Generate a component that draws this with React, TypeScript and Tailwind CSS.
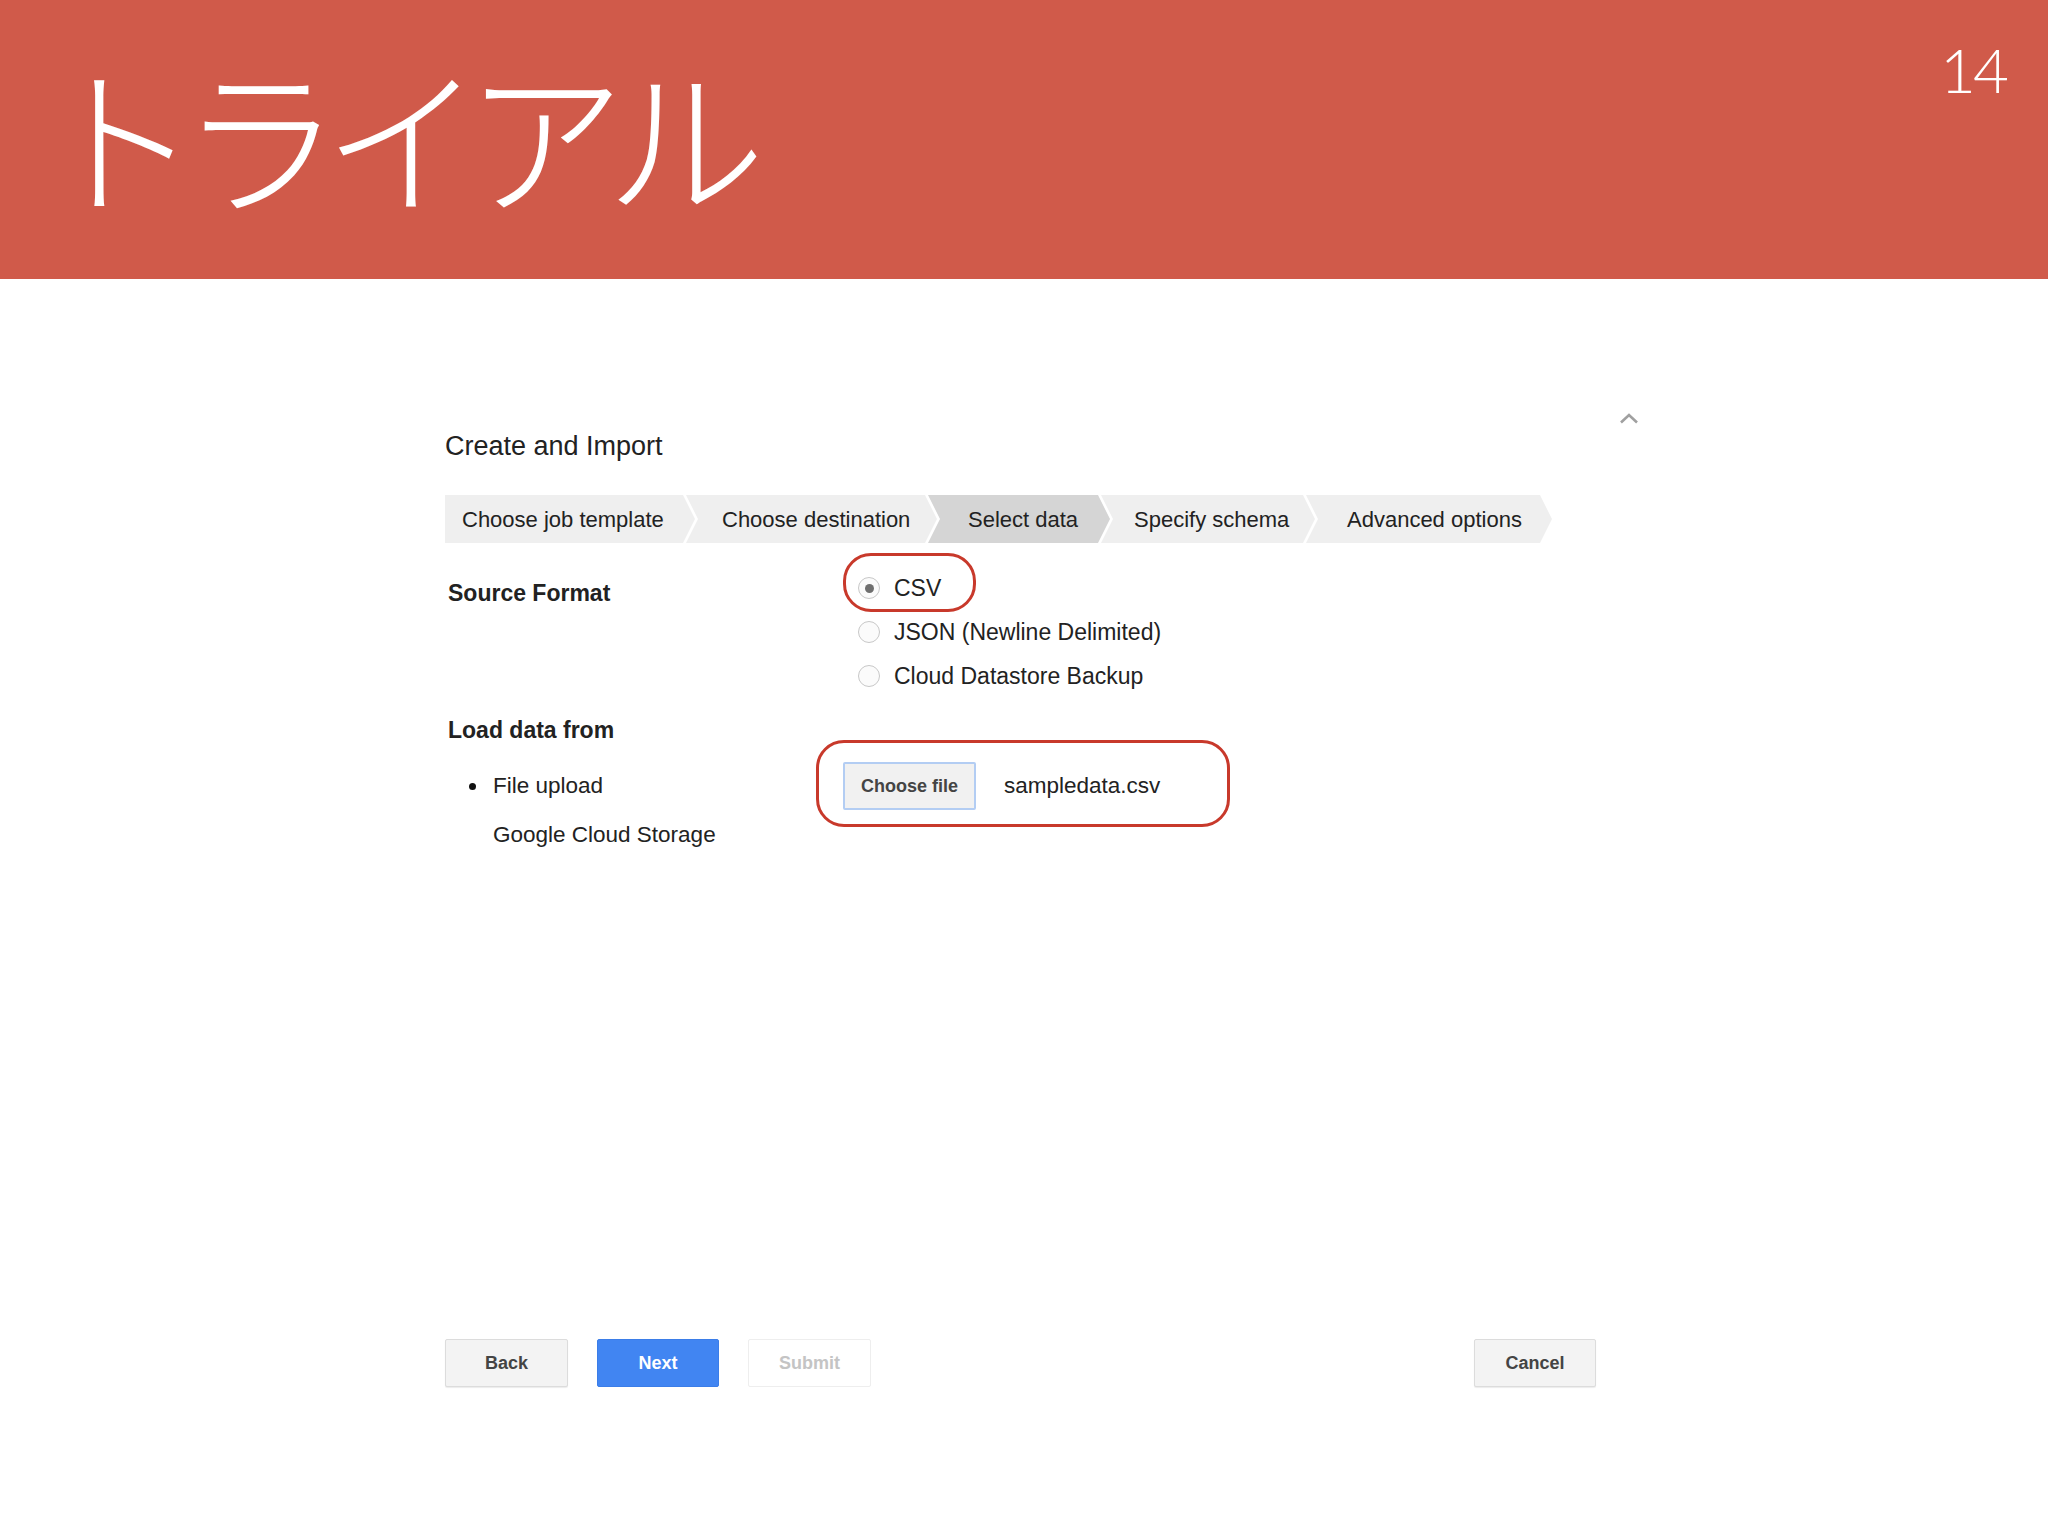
import React from 'react';

const steps = [
    { label: 'Choose job template', w: 'w-[250px]', pl: 'pl-[17px]', first: true },
    { label: 'Choose destination', w: 'w-[251px]', pl: 'pl-[36px]' },
    { label: 'Select data', w: 'w-[182px]', pl: 'pl-[40px]', active: true },
    { label: 'Specify schema', w: 'w-[214px]', pl: 'pl-[33px]' },
    { label: 'Advanced options', w: 'w-[246px]', pl: 'pl-[41px]' },
];

function Radio({ checked, label }: { checked?: boolean; label: string }) {
    return (
        <div className="h-[44px] flex items-center">
            <span className="w-[22px] h-[22px] rounded-full border border-[#c8c8c8] bg-[#fbfbfb] flex items-center justify-center">
                {checked && <span className="w-[9px] h-[9px] rounded-full bg-[#6f6f6f]" />}
            </span>
            <span className="ml-[14px] text-[23px] text-[#222]">{label}</span>
        </div>
    );
}

export default function App() {
    return (
        <div className="w-[2048px] h-[1536px] bg-white overflow-hidden font-['Liberation_Sans',Arial,sans-serif]">
            {/* Slide header */}
            <div className="h-[279px] bg-[#d05a4a] flex justify-between items-start">
                <h1 className="ml-[39px] mt-[53px] text-[160px] leading-[160px] font-light text-white tracking-[-18px] font-['Noto_Sans_CJK_JP',sans-serif]">
                    トライアル
                </h1>
                <span className="mr-[42px] mt-[38px] text-[62px] leading-[62px] font-light tracking-[-3px] text-white font-['Lato',sans-serif]">14</span>
            </div>

            {/* Dialog */}
            <div className="pl-[445px] pt-[134px]">
                <div className="w-[1195px] flex justify-between items-start">
                    <h2 className="mt-[18px] text-[27px] leading-[30px] text-[#222]">Create and Import</h2>
                    <svg width="20" height="11" viewBox="0 0 20 11" className="mr-px">
                        <polyline points="2,9.5 10,2 18,9.5" fill="none" stroke="#a0a0a0" strokeWidth="2.6" />
                    </svg>
                </div>

                {/* Steps */}
                <div className="mt-[34px] flex h-[48px]">
                    {steps.map((s, i) => (
                        <div
                            key={s.label}
                            className={`${s.w} ${s.pl} ${i > 0 ? '-ml-[9px]' : ''} h-full flex items-center text-[22px] text-[#222] ${s.active ? 'bg-[#d5d5d5]' : 'bg-[#efefef]'} ${s.first ? '[clip-path:polygon(0_0,calc(100%_-_12px)_0,100%_50%,calc(100%_-_12px)_100%,0_100%)]' : '[clip-path:polygon(0_0,calc(100%_-_12px)_0,100%_50%,calc(100%_-_12px)_100%,0_100%,12px_50%)]'}`}
                        >
                            {s.label}
                        </div>
                    ))}
                </div>

                {/* Source format */}
                <div className="mt-[23px] flex">
                    <div className="w-[400px] pl-[3px] pt-[14px] text-[23px] leading-[26px] font-bold text-[#222]">Source Format</div>
                    <div className="relative pl-[13px]">
                        <div className="absolute left-[-2px] top-[-13px] w-[133px] h-[59px] rounded-[28px] border-[3.5px] border-[#c8392b]" />
                        <Radio checked label="CSV" />
                        <Radio label="JSON (Newline Delimited)" />
                        <Radio label="Cloud Datastore Backup" />
                    </div>
                </div>

                {/* Load data from */}
                <div className="mt-[19px] pl-[3px] text-[23px] leading-[26px] font-bold text-[#222]">Load data from</div>
                <div className="mt-[19px] flex">
                    <div className="w-[398px] flex flex-col text-[22.5px] text-[#222]">
                        <div className="h-[48px] flex items-center pl-[24px]">
                            <span className="w-[7px] h-[7px] rounded-full bg-[#111]" />
                            <span className="ml-[17px]">File upload</span>
                        </div>
                        <div className="mt-[12px] pl-[48px] leading-[26px]">Google Cloud Storage</div>
                    </div>
                    <div className="relative flex items-start h-[48px]">
                        <div className="absolute left-[-27px] top-[-22px] w-[414px] h-[87px] rounded-[28px] border-[3.5px] border-[#c8392b]" />
                        <button className="w-[133px] h-[48px] border-2 border-[#b3cdf3] bg-[#f1f1f1] rounded-[2px] text-[18px] font-bold text-[#444]">
                            Choose file
                        </button>
                        <span className="ml-[28px] h-[48px] flex items-center text-[22.5px] text-[#222]">sampledata.csv</span>
                    </div>
                </div>

                {/* Footer buttons */}
                <div className="mt-[491px] w-[1151px] flex items-center">
                    <button className="w-[123px] h-[48px] rounded-[2px] border border-[#dcdcdc] bg-[#f3f3f3] shadow-[0_1px_1px_rgba(0,0,0,0.08)] text-[18px] font-bold text-[#444]">Back</button>
                    <button className="ml-[29px] w-[122px] h-[48px] rounded-[2px] border border-[#3b7de8] bg-[#4185f2] text-[18px] font-bold text-white">Next</button>
                    <button className="ml-[29px] w-[123px] h-[48px] rounded-[2px] border border-[#eeeeee] bg-white text-[18px] font-bold text-[#c4c4c4]">Submit</button>
                    <button className="ml-auto w-[122px] h-[48px] rounded-[2px] border border-[#dcdcdc] bg-[#f3f3f3] shadow-[0_1px_1px_rgba(0,0,0,0.08)] text-[18px] font-bold text-[#444]">Cancel</button>
                </div>
            </div>
        </div>
    );
}
